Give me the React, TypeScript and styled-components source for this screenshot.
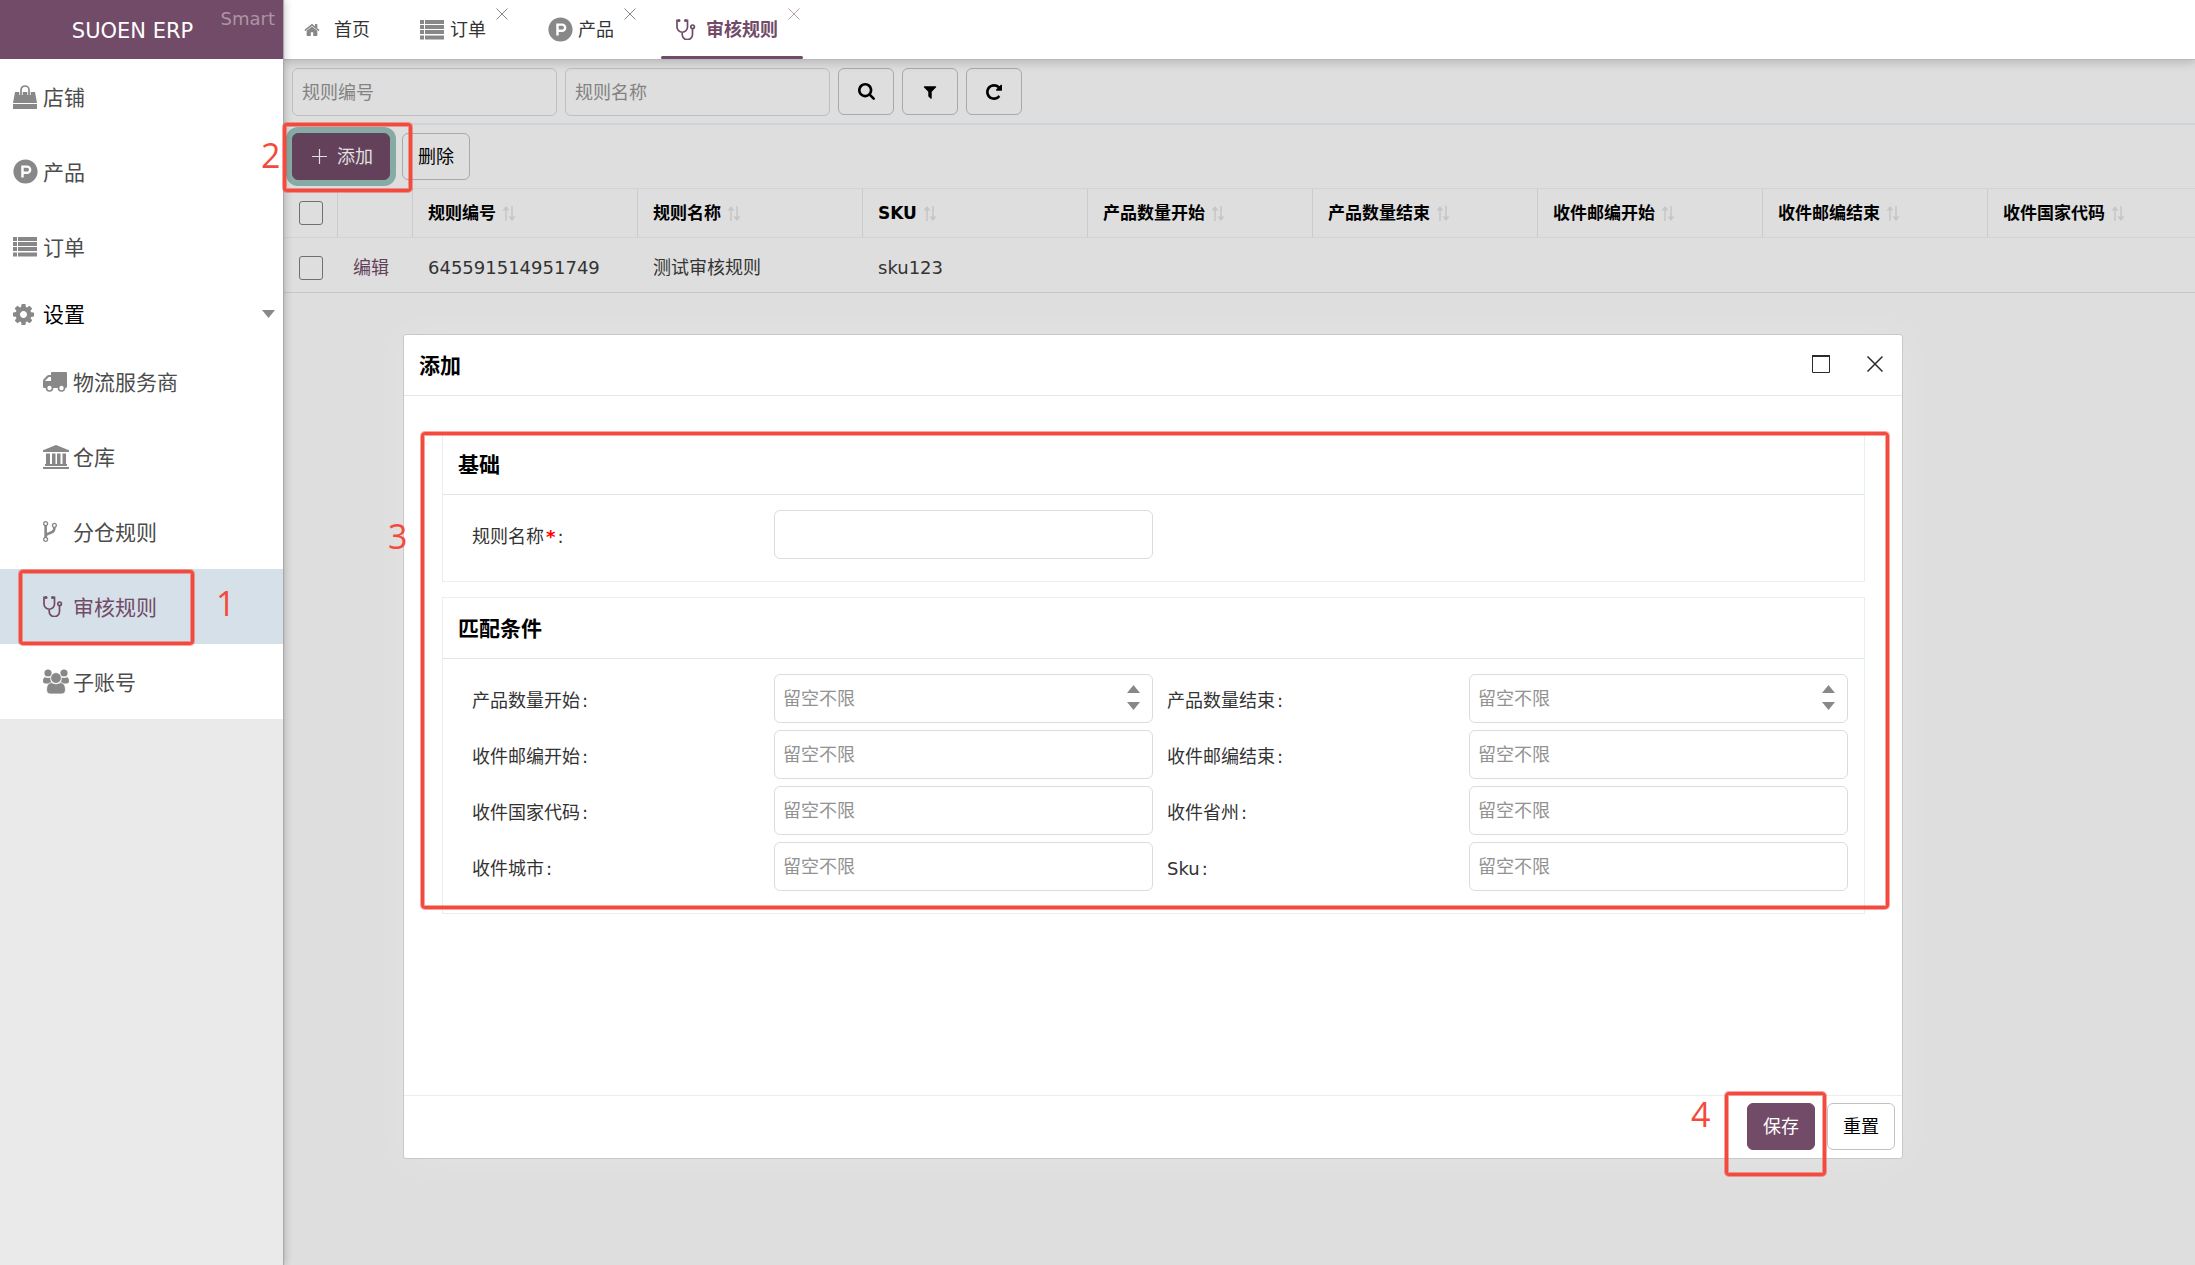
import React from "react";
import styled, { createGlobalStyle, css } from "styled-components";
import { FaProductHunt } from "react-icons/fa";

const color = {
  brand: "#714b67",
  brandDim: "#63415b",
  icon: "#888888",
  red: "#f44a3e",
  redSoft: "rgba(244, 74, 62, 0.5)",
  page: "#dedede",
  lineBlue: "#cdd4da",
  ink: "#333333",
};

const GlobalStyle = createGlobalStyle`
  *, *::before, *::after { box-sizing: border-box; }
  body { margin: 0; background: ${color.page}; }
  body, button, input {
    font-family: "DejaVu Sans", "Noto Sans CJK SC", sans-serif;
    font-size: 18px;
    line-height: 24px;
    color: ${color.ink};
  }
  button { cursor: pointer; }
  a { color: inherit; text-decoration: none; }
`;

/* ---------- icons ---------- */

const BagIcon = () => (
  <svg width="24" height="24" viewBox="0 0 24 24" aria-hidden="true">
    <path d="M2 7h20l2 11H0zM0 19h24v5H0z" fill="currentColor" />
    <path d="M8 10V5a4 4 0 0 1 8 0v5" fill="none" stroke="#fff" strokeWidth="3.4" />
    <path d="M8 10V5a4 4 0 0 1 8 0v5" fill="none" stroke="currentColor" strokeWidth="1.7" strokeLinecap="round" />
  </svg>
);

const ListIcon = () => (
  <svg width="24" height="20" viewBox="0 0 24 20" aria-hidden="true">
    <path
      fill="currentColor"
      d="M0 0h4v4H0zM5 0h19v4H5zM0 5h4v4H0zM5 5h19v4H5zM0 10h4v4H0zM5 10h19v4H5zM0 15.500h4v4H0zM5 15.500h19v4H5z"
    />
  </svg>
);

const TruckIcon = () => (
  <svg width="24" height="20" viewBox="0 0 24 20" aria-hidden="true">
    <path
      fill="currentColor"
      fillRule="evenodd"
      d="M9 0h14a1 1 0 0 1 1 1v13.500a1.500 1.500 0 0 1-1.500 1.500H1.500A1.500 1.500 0 0 1 0 14.500V9q0-1 .7-1.800L4 3.800Q4.700 3 5.800 3H8V1a1 1 0 0 1 1-1zM8 5H5.800L2.300 8.600V9H8z"
    />
    <circle cx="6.500" cy="16" r="3" fill="#fff" stroke="currentColor" strokeWidth="1.600" />
    <circle cx="18.500" cy="16" r="3" fill="#fff" stroke="currentColor" strokeWidth="1.600" />
  </svg>
);

const BankIcon = () => (
  <svg width="26" height="24" viewBox="0 0 26 24" aria-hidden="true">
    <path
      fill="currentColor"
      d="M13 0l13 5.200V7H0V5.200zM3 8.500h4V19h2V8.500h3.500V19h1.500V8.500h3.500V19h2V8.500H23V19h1v2H2v-2h1zM0 22h26v2H0z"
    />
  </svg>
);

const ForkIcon = () => (
  <svg width="14" height="21" viewBox="384 128 1024 1536" aria-hidden="true">
    <path
      fill="currentColor"
      d="M672 1472q0-40-28-68t-68-28-68 28-28 68 28 68 68 28 68-28 28-68zm0-1152q0-40-28-68t-68-28-68 28-28 68 28 68 68 28 68-28 28-68zm640 128q0-40-28-68t-68-28-68 28-28 68 28 68 68 28 68-28 28-68zm96 0q0 52-26 96.500t-70 69.500q-2 287-226 414-67 38-203 81-128 40-169.500 71t-41.500 100v26q44 25 70 69.500t26 96.500q0 80-56 136t-136 56-136-56-56-136q0-52 26-96.500t70-69.500v-820q-44-25-70-69.500t-26-96.500q0-80 56-136t136-56 136 56 56 136q0 52-26 96.500t-70 69.500v497q54-26 154-57 55-17 87.500-29.500t70.500-31 59-39.500 40.500-51 28-69.500 8.500-91.500q-44-25-70-69.500t-26-96.500q0-80 56-136t136-56 136 56 56 136z"
    />
  </svg>
);

const StethoscopeIcon = () => (
  <svg width="20" height="21" viewBox="0 0 20 21" aria-hidden="true">
    <g fill="none" stroke="currentColor" strokeWidth="1.700">
      <path d="M3 1.300H1V8a5 5 0 0 0 10.500 0V1.300h-2M6.200 13v2.500a5 5 0 0 0 10.300 0V9.500" />
      <circle cx="16.600" cy="7.800" r="1.800" />
    </g>
    <circle cx="3" cy="1.500" r="1.500" fill="currentColor" />
    <circle cx="9.500" cy="1.500" r="1.500" fill="currentColor" />
  </svg>
);

const UsersIcon = () => (
  <svg width="26" height="25" viewBox="0 0 26 25" aria-hidden="true">
    <g fill="currentColor">
      <circle cx="5" cy="4" r="3.600" />
      <circle cx="21" cy="4" r="3.600" />
      <path d="M2 8.200q3 1.400 6 0 -1.200 3.500 1 6.300H2.500Q0 14.500 0 12q0-3.400 2-3.800zM24 8.200q-3 1.400-6 0 1.200 3.500-1 6.300h6.500q2.500 0 2.500-2.500 0-3.400-2-3.800z" />
    </g>
    <g fill="currentColor" stroke="#fff" strokeWidth="0.800">
      <path d="M8.500 13.600q4.500 2.800 9 0Q22.500 14 22.500 21q0 4-3.500 4H7q-3.500 0-3.500-4 0-7 5-7.400z" />
      <circle cx="13" cy="9" r="5.400" />
    </g>
  </svg>
);

const FA: Record<string, string> = {
  cog: "M1152 896q0-106-75-181t-181-75-181 75-75 181 75 181 181 75 181-75 75-181zm512-109v222q0 12-8 23t-20 13l-185 28q-19 54-39 91 35 50 107 138 10 12 10 25t-9 23q-27 37-99 108t-94 71q-12 0-26-9l-138-108q-44 23-91 38-16 136-29 186-7 28-36 28h-222q-14 0-24.500-8.500t-11.500-21.500l-28-184q-49-16-90-37l-141 107q-10 9-25 9-14 0-25-11-126-114-165-168-7-10-7-23 0-12 8-23 15-21 51-66.500t54-70.500q-27-50-41-99l-183-27q-13-2-21-12.500t-8-23.500v-222q0-12 8-23t19-13l186-28q14-46 39-92-40-57-107-138-10-12-10-24 0-10 9-23 26-36 98.500-107.500t94.500-71.500q13 0 26 10l138 107q44-23 91-38 16-136 29-186 7-28 36-28h222q14 0 24.500 8.500t11.500 21.500l28 184q49 16 90 37l142-107q9-9 24-9 13 0 25 10 129 119 165 170 7 8 7 22 0 12-8 23-15 21-51 66.500t-54 70.500q26 50 41 98l183 28q13 2 21 12.500t8 23.500z",
  home: "M1472 992v480q0 26-19 45t-45 19h-384v-384h-256v384h-384q-26 0-45-19t-19-45v-480q0-1 .5-3t.5-3l575-474 575 474q1 2 1 6zm223-69l-62 74q-8 9-21 11h-3q-13 0-21-7l-692-577-692 577q-12 8-24 7-13-2-21-11l-62-74q-8-10-7-23.500t11-21.500l719-599q32-26 76-26t76 26l244 204v-195q0-14 9-23t23-9h192q14 0 23 9t9 23v408l219 182q10 8 11 21.500t-7 23.500z",
  search:
    "M1216 832q0-185-131.500-316.500t-316.500-131.500-316.500 131.500-131.500 316.500 131.500 316.500 316.500 131.500 316.500-131.500 131.500-316.500zm512 832q0 52-38 90t-90 38q-54 0-90-38l-343-342q-179 124-399 124-143 0-273.500-55.500t-225-150-150-225-55.500-273.500 55.500-273.500 150-225 225-150 273.500-55.500 273.500 55.500 225 150 150 225 55.500 273.500q0 220-124 399l343 343q37 37 37 90z",
  filter:
    "M1595 295q17 41-14 70l-493 493v742q0 42-39 59-13 5-25 5-27 0-45-19l-256-256q-19-19-19-45v-486l-493-493q-31-29-14-70 17-39 59-39h1280q42 0 59 39z",
  reload:
    "M1664 256v448q0 26-19 45t-45 19h-448q-42 0-59-40-17-39 14-69l138-138q-148-137-349-137-104 0-198.500 40.500t-163.500 109.500-109.500 163.500-40.500 198.500 40.500 198.500 109.500 163.500 163.500 109.500 198.500 40.500q119 0 225-52t179-147q7-10 23-12 15 0 25 9l137 138q9 8 9.500 20.500t-7.500 22.500q-109 132-264 204.500t-327 72.500q-156 0-298-61t-245-164-164-245-61-298 61-298 164-245 245-164 298-61q147 0 284.500 55.500t244.500 156.500l130-129q29-31 70-14 39 17 39 59z",
};

const Glyph = ({ name, size, box = "0 0 1792 1792" }: { name: string; size: number; box?: string }) => (
  <svg width={size} height={size} viewBox={box} aria-hidden="true">
    <path fill="currentColor" d={FA[name]} />
  </svg>
);

const CrossIcon = ({ size, weight = 1 }: { size: number; weight?: number }) => (
  <svg width={size} height={size} viewBox={`0 0 ${size} ${size}`} aria-hidden="true">
    <path d={`M0.500 0.500L${size - 0.5} ${size - 0.5}M${size - 0.5} 0.500L0.500 ${size - 0.5}`} stroke="currentColor" strokeWidth={weight} />
  </svg>
);

const PlusIcon = () => (
  <svg width="15" height="15" viewBox="0 0 15 15" aria-hidden="true">
    <path d="M7.500 0v15M0 7.500h15" stroke="currentColor" strokeWidth="1.200" />
  </svg>
);

const SquareIcon = () => (
  <svg width="18" height="18" viewBox="0 0 18 18" aria-hidden="true">
    <path d="M.5 1v16.500h17V1" fill="none" stroke="currentColor" />
    <path d="M0 1h18" stroke="currentColor" strokeWidth="2" />
  </svg>
);

const SortIcon = () => (
  <svg width="14" height="15" viewBox="0 0 14 15" aria-hidden="true">
    <path d="M4 15V3M10 0v12" stroke="#c6c6c6" strokeWidth="1.500" />
    <path d="M4 0l3.500 4.500h-7zM10 15l3.500-4.500h-7z" fill="#c6c6c6" />
  </svg>
);

const Triangle = ({ up }: { up?: boolean }) => (
  <svg width="13" height="8" viewBox="0 0 13 8" aria-hidden="true">
    <path d={up ? "M6.500 0L13 8H0z" : "M0 0h13L6.500 8z"} fill={color.icon} />
  </svg>
);

/* ---------- callouts laid over the page ---------- */

const Frame = styled.span<{ $inset: string }>`
  position: absolute;
  inset: ${(p) => p.$inset};
  z-index: 5;
  border: 3px solid ${color.red};
  border-radius: 4px;
  box-shadow: 0 0 0 1px ${color.redSoft}, inset 0 0 0 1px ${color.redSoft};
  pointer-events: none;
`;

const AddFrame = styled(Frame)`
  width: 129px;
  height: 69px;
`;

const StepNumber = styled.span<{ $left: number; $top: number }>`
  position: absolute;
  left: ${(p) => p.$left}px;
  top: ${(p) => p.$top}px;
  z-index: 5;
  font: 400 34px/34px "Open Sans", sans-serif;
  color: ${color.red};
  pointer-events: none;
`;

/* ---------- shell ---------- */

const Shell = styled.div`
  position: relative;
  display: flex;
  min-height: 100vh;
  overflow: hidden;
`;

const Sidebar = styled.aside`
  position: relative;
  z-index: 2;
  flex: 0 0 283px;
  background: #eaeaea;
  box-shadow: 1px 0 1px #a9a9b2, 2px 0 8px rgba(0, 0, 0, 0.2);
`;

const Brand = styled.header`
  position: relative;
  display: flex;
  align-items: center;
  justify-content: center;
  height: 59px;
  padding: 2px 18px 0 0;
  background: ${color.brand};
  color: #fff;
  font-size: 21px;
`;

const BrandTag = styled.span`
  position: absolute;
  top: 7px;
  right: 8px;
  font-size: 18px;
  color: rgba(255, 255, 255, 0.42);
`;

const Menu = styled.nav`
  background: #fff;
`;

const MenuLink = styled.a<{ $sub?: boolean; $active?: boolean }>`
  position: relative;
  display: flex;
  align-items: center;
  height: 75px;
  padding-left: ${(p) => (p.$sub ? 43 : 13)}px;
  font-size: 21px;
  color: ${(p) => (p.$active ? color.brand : "#4c4c4c")};
  background: ${(p) => (p.$active ? "#d5e0e9" : "transparent")};
`;

const MenuGroup = styled.button`
  display: flex;
  align-items: center;
  width: 100%;
  height: 60px;
  padding: 0 8px 0 13px;
  border: 0;
  background: none;
  font-size: 21px;
  color: #000;
`;

const MenuText = styled.span`
  flex: 1;
  padding-top: 2px;
  text-align: left;
`;

const IconSlot = styled.span<{ $active?: boolean }>`
  display: flex;
  align-items: center;
  flex: 0 0 30px;
  color: ${(p) => (p.$active ? color.brand : color.icon)};
`;

const Main = styled.main`
  position: relative;
  flex: 1;
  min-width: 0;
  display: flex;
  flex-direction: column;
`;

const TabBar = styled.nav`
  position: relative;
  z-index: 1;
  display: flex;
  gap: 22px;
  height: 59px;
  padding-left: 6px;
  background: #fff;
  box-shadow: 0 1px 0 #b9b9c2, 0 3px 10px rgba(0, 0, 0, 0.2);
`;

const Tab = styled.div<{ $active?: boolean; $fixed?: boolean }>`
  position: relative;
  display: flex;
  align-items: center;
  padding: 0 ${(p) => (p.$fixed ? 13 : 25)}px 0 15px;
  color: ${color.ink};
  ${(p) =>
    p.$active &&
    css`
      color: ${color.brand};
      font-weight: 700;
      &::after {
        content: "";
        position: absolute;
        inset: auto 0 0 0;
        height: 3px;
        border-radius: 2px;
        background: ${color.brand};
      }
    `}
`;

const TabClose = styled.button<{ $active?: boolean }>`
  position: absolute;
  top: 8px;
  right: 3px;
  display: flex;
  padding: 0;
  border: 0;
  background: none;
  color: ${(p) => (p.$active ? "#b79fb1" : color.icon)};
`;

/* ---------- list page ---------- */

const Toolbar = styled.div<{ $gap: number; $line: number }>`
  display: flex;
  align-items: flex-start;
  gap: ${(p) => p.$gap}px;
  padding: 8px 9px;
  border-bottom: ${(p) => p.$line}px solid ${color.lineBlue};
`;

const SearchBar = styled(Toolbar)`
  padding-top: 9px;
  padding-bottom: 7px;
`;

const FilterInput = styled.input`
  width: 265px;
  height: 48px;
  padding: 0 9px;
  border: 1px solid #bebec0;
  border-radius: 6px;
  background: transparent;
  &::placeholder {
    color: #828282;
    opacity: 1;
  }
`;

const Button = styled.button<{ $kind?: "primary" | "dim" | "plain"; $focus?: boolean }>`
  display: flex;
  align-items: center;
  justify-content: center;
  gap: 10px;
  height: 47px;
  padding: 0 15px;
  border: 1px solid #a9a9ad;
  border-radius: 6px;
  background: transparent;
  color: #000;
  ${(p) =>
    p.$kind === "plain" &&
    css`
      border-color: #c2c2c6;
      background: #fff;
    `}
  ${(p) =>
    p.$kind === "primary" &&
    css`
      border-color: ${color.brand};
      background: ${color.brand};
      color: #fff;
    `}
  ${(p) =>
    p.$kind === "dim" &&
    css`
      padding: 0 16px 0 19px;
      border-color: ${color.brandDim};
      background: ${color.brandDim};
      color: #e0e0e0;
    `}
  ${(p) =>
    p.$focus &&
    css`
      box-shadow: 0 0 0 6px #86aaa4;
    `}
`;

const IconButton = styled(Button)`
  width: 56px;
  padding: 0;
`;

const Anchor = styled.div`
  position: relative;
`;

const Table = styled.table`
  width: 100%;
  table-layout: fixed;
  border-collapse: separate;
  border-spacing: 0;
`;

const SelectCol = styled.col`
  width: 55px;
`;
const ActionCol = styled.col`
  width: 75px;
`;
const DataCol = styled.col`
  width: 225px;
`;

const HeadCell = styled.th`
  height: 49px;
  padding: 0 15px;
  border-right: 1px solid #cbcbcf;
  border-bottom: 1px solid ${color.lineBlue};
  text-align: left;
  font-size: 17px;
  color: #000;
  white-space: nowrap;
  &:first-child {
    padding: 0 16px;
  }
  &:last-child {
    border-right: 0;
  }
`;

const SortLabel = styled.span`
  display: flex;
  align-items: center;
  gap: 6px;
`;

const Cell = styled.td`
  height: 55px;
  padding: 5px 15px 0;
  border-bottom: 1px solid #c6c6c8;
  white-space: nowrap;
  &:first-child {
    padding: 5px 16px 0;
  }
`;

const EditLink = styled.a`
  color: ${color.brandDim};
`;

const Check = styled.input`
  appearance: none;
  display: block;
  width: 24px;
  height: 24px;
  margin: 0;
  border: 1px solid #707070;
  border-radius: 3px;
`;

/* ---------- dialog ---------- */

const Dialog = styled.section`
  position: absolute;
  left: 120px;
  top: 334px;
  width: 1500px;
  height: 825px;
  display: flex;
  flex-direction: column;
  border: 1px solid #c8c8c8;
  border-radius: 3px;
  background: #fff;
  box-shadow: 1px 1px 40px rgba(255, 255, 255, 0.2);
`;

const DialogHead = styled.header`
  display: flex;
  align-items: center;
  justify-content: space-between;
  height: 61px;
  padding: 0 19px 0 15px;
  border-bottom: 1px solid #e4e6e8;
`;

const Heading = styled.h2`
  margin: 0;
  padding-top: 2px;
  font-size: 21px;
  font-weight: 700;
  color: #000;
`;

const DialogTools = styled.div`
  display: flex;
  align-items: center;
  gap: 37px;
  padding-bottom: 2px;
`;

const BareButton = styled.button`
  display: flex;
  padding: 0;
  border: 0;
  background: none;
  color: #2a2a30;
`;

const DialogBody = styled.div`
  flex: 1;
  padding: 37px 37px 37px 38px;
`;

const FormArea = styled.form`
  position: relative;
  display: flex;
  flex-direction: column;
  gap: 15px;
`;

const Panel = styled.fieldset`
  margin: 0;
  padding: 0;
  border: 1px solid #e6eef6;
`;

const PanelTitle = styled.div`
  display: flex;
  align-items: center;
  height: 61px;
  padding: 0 15px;
  border-bottom: 1px solid #e2e5e8;
`;

const PanelGrid = styled.div`
  display: grid;
  grid-template-columns: 1fr 1fr;
  row-gap: 7px;
  padding: 15px 16px 22px 15px;
`;

const Field = styled.div`
  display: grid;
  grid-template-columns: 5fr 6fr;
  align-items: center;
`;

const FieldLabel = styled.label`
  padding: 4px 0 0 14px;
`;

const Required = styled.span`
  margin-left: 2px;
  font-weight: 700;
  color: #f00;
`;

const Colon = styled.span`
  margin-left: 2px;
`;

const InputBox = styled.div`
  position: relative;
`;

const TextInput = styled.input`
  display: block;
  width: 100%;
  height: 49px;
  padding: 0 8px;
  border: 1px solid #dcdcde;
  border-radius: 6px;
  background: #fff;
  appearance: textfield;
  &::-webkit-inner-spin-button {
    appearance: none;
  }
  &::placeholder {
    color: #929292;
    opacity: 1;
  }
`;

const Spinner = styled.div`
  position: absolute;
  top: 11px;
  right: 13px;
  display: flex;
  flex-direction: column;
  gap: 9px;
`;

const DialogFoot = styled.footer`
  display: flex;
  justify-content: flex-end;
  gap: 12px;
  padding: 7px 7px 8px;
  border-top: 1px solid #e6eef2;
`;

/* ---------- data ---------- */

const topMenu = [
  { name: "店铺", icon: <BagIcon /> },
  { name: "产品", icon: <FaProductHunt size={25} /> },
  { name: "订单", icon: <ListIcon /> },
];

const subMenu = [
  { name: "物流服务商", icon: <TruckIcon /> },
  { name: "仓库", icon: <BankIcon /> },
  { name: "分仓规则", icon: <ForkIcon /> },
  { name: "审核规则", icon: <StethoscopeIcon />, active: true },
  { name: "子账号", icon: <UsersIcon /> },
];

const tabs = [
  { name: "首页", icon: <Glyph name="home" size={16} box="32 32 1728 1728" />, fixed: true },
  { name: "订单", icon: <ListIcon /> },
  { name: "产品", icon: <FaProductHunt size={25} /> },
  { name: "审核规则", icon: <StethoscopeIcon />, active: true },
];

const columns = ["规则编号", "规则名称", "SKU", "产品数量开始", "产品数量结束", "收件邮编开始", "收件邮编结束", "收件国家代码"];
const row = ["645591514951749", "测试审核规则", "sku123", "", "", "", "", ""];

const conditions = [
  { id: "qty-from", label: "产品数量开始", number: true },
  { id: "qty-to", label: "产品数量结束", number: true },
  { id: "zip-from", label: "收件邮编开始" },
  { id: "zip-to", label: "收件邮编结束" },
  { id: "country", label: "收件国家代码" },
  { id: "state", label: "收件省州" },
  { id: "city", label: "收件城市" },
  { id: "sku", label: "Sku" },
];

export default function App() {
  return (
    <Shell>
      <GlobalStyle />
      <Sidebar>
        <Brand>
          SUOEN ERP
          <BrandTag>Smart</BrandTag>
        </Brand>
        <Menu>
          {topMenu.map((m) => (
            <MenuLink key={m.name} href="#">
              <IconSlot>{m.icon}</IconSlot>
              <MenuText>{m.name}</MenuText>
            </MenuLink>
          ))}
          <MenuGroup type="button" aria-expanded="true">
            <IconSlot>
              <Glyph name="cog" size={21} box="128 128 1536 1536" />
            </IconSlot>
            <MenuText>设置</MenuText>
            <Triangle />
          </MenuGroup>
          {subMenu.map((m) => (
            <MenuLink key={m.name} href="#" $sub $active={m.active}>
              <IconSlot $active={m.active}>{m.icon}</IconSlot>
              <MenuText>{m.name}</MenuText>
              {m.active && (
                <>
                  <Frame $inset="1px 89px -1px 19px" />
                  <StepNumber $left={216} $top={17}>1</StepNumber>
                </>
              )}
            </MenuLink>
          ))}
        </Menu>
        <StepNumber $left={261} $top={138}>2</StepNumber>
      </Sidebar>

      <Main>
        <TabBar>
          {tabs.map((t) => (
            <Tab key={t.name} $active={t.active} $fixed={t.fixed}>
              <IconSlot $active={t.active}>{t.icon}</IconSlot>
              {t.name}
              {!t.fixed && (
                <TabClose type="button" aria-label="关闭" $active={t.active}>
                  <CrossIcon size={12} />
                </TabClose>
              )}
            </Tab>
          ))}
        </TabBar>

        <SearchBar $gap={8} $line={2}>
          <FilterInput placeholder="规则编号" aria-label="规则编号" />
          <FilterInput placeholder="规则名称" aria-label="规则名称" />
          <IconButton type="button" aria-label="搜索">
            <Glyph name="search" size={17} box="64 128 1664 1664" />
          </IconButton>
          <IconButton type="button" aria-label="筛选">
            <Glyph name="filter" size={16} />
          </IconButton>
          <IconButton type="button" aria-label="刷新">
            <Glyph name="reload" size={16} box="128 128 1536 1536" />
          </IconButton>
        </SearchBar>

        <Toolbar $gap={12} $line={1}>
          <Button type="button" $kind="dim" $focus>
            <PlusIcon />
            添加
          </Button>
          <Button type="button">删除</Button>
        </Toolbar>

        <Table>
          <colgroup>
            <SelectCol />
            <ActionCol />
            {columns.slice(0, -1).map((c) => (
              <DataCol key={c} />
            ))}
            <col />
          </colgroup>
          <thead>
            <tr>
              <HeadCell>
                <Check type="checkbox" aria-label="全选" />
              </HeadCell>
              <HeadCell />
              {columns.map((c) => (
                <HeadCell key={c}>
                  <SortLabel>
                    {c}
                    <SortIcon />
                  </SortLabel>
                </HeadCell>
              ))}
            </tr>
          </thead>
          <tbody>
            <tr>
              <Cell>
                <Check type="checkbox" aria-label="选择" />
              </Cell>
              <Cell>
                <EditLink href="#">编辑</EditLink>
              </Cell>
              {row.map((v, i) => (
                <Cell key={columns[i]}>{v}</Cell>
              ))}
            </tr>
          </tbody>
        </Table>

        <Dialog role="dialog" aria-label="添加">
          <DialogHead>
            <Heading>添加</Heading>
            <DialogTools>
              <BareButton type="button" aria-label="最大化">
                <SquareIcon />
              </BareButton>
              <BareButton type="button" aria-label="关闭">
                <CrossIcon size={16} weight={1.5} />
              </BareButton>
            </DialogTools>
          </DialogHead>
          <DialogBody>
            <FormArea>
              <Panel>
                <PanelTitle>
                  <Heading>基础</Heading>
                </PanelTitle>
                <PanelGrid>
                  <Field>
                    <FieldLabel htmlFor="rule-name">
                      规则名称<Required>*</Required>
                      <Colon>:</Colon>
                    </FieldLabel>
                    <TextInput id="rule-name" />
                  </Field>
                </PanelGrid>
              </Panel>
              <Panel>
                <PanelTitle>
                  <Heading>匹配条件</Heading>
                </PanelTitle>
                <PanelGrid>
                  {conditions.map((f) => (
                    <Field key={f.id}>
                      <FieldLabel htmlFor={f.id}>
                        {f.label}
                        <Colon>:</Colon>
                      </FieldLabel>
                      <InputBox>
                        <TextInput id={f.id} type={f.number ? "number" : "text"} placeholder="留空不限" />
                        {f.number && (
                          <Spinner>
                            <BareButton type="button" aria-label="增加">
                              <Triangle up />
                            </BareButton>
                            <BareButton type="button" aria-label="减少">
                              <Triangle />
                            </BareButton>
                          </Spinner>
                        )}
                      </InputBox>
                    </Field>
                  ))}
                </PanelGrid>
              </Panel>
              <Frame $inset="-1px -24px 5px -21px" />
              <StepNumber $left={-54} $top={86}>3</StepNumber>
            </FormArea>
          </DialogBody>
          <DialogFoot>
            <Anchor>
              <Button type="button" $kind="primary">保存</Button>
              <Frame $inset="-11px -11px -26px -22px" />
              <StepNumber $left={-56} $top={-6}>4</StepNumber>
            </Anchor>
            <Button type="button" $kind="plain">重置</Button>
          </DialogFoot>
        </Dialog>
      </Main>
      <AddFrame $inset="123px auto auto 283px" />
    </Shell>
  );
}
